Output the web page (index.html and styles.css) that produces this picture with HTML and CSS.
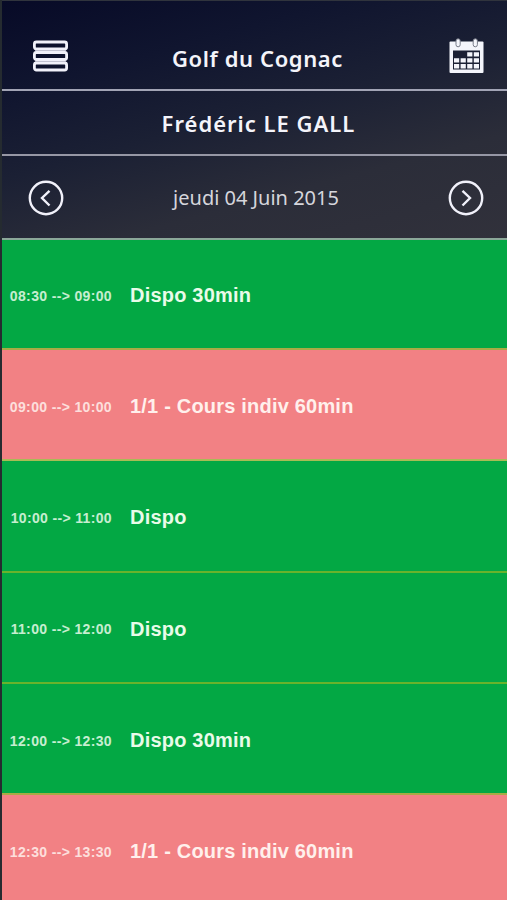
FILE: index.html
```
<!DOCTYPE html>
<html lang="fr">
<head>
  <meta charset="UTF-8" />
  <meta name="viewport" content="width=device-width, initial-scale=1.0" />
  <title>Golf du Cognac</title>
  <link rel="stylesheet" href="styles.css">
</head>
<body>

  <header class="header">
    <div class="bar top-bar">
      <svg class="icon menu" width="38" height="32" viewBox="0 0 38 32">
        <path class="shade" d="M5 10.700h31M5 21.300h31" />
        <rect x="4.400" y="2" width="32.200" height="7" rx="2" />
        <rect x="4.400" y="12.500" width="32.200" height="7" rx="2" />
        <rect x="4.400" y="23" width="32.200" height="7" rx="2" />
      </svg>
      <h1>Golf du Cognac</h1>
      <svg class="icon calendar" width="36" height="36" viewBox="0 0 36 36">
        <path class="sheet" d="M1.5 3.5h32q1 0 1 1v29.500q0 1-1 1h-32q-1 0-1-1v-29.500q0-1 1-1z" />
        <path class="grid" d="M4 12.500h27v19h-27z" />
        <path class="days" d="M18.200 14.300h5.200v4.300h-5.200zM24.800 14.300h5.200v4.300h-5.200zM5 20.200h5.200v4.300h-5.200zM11.600 20.200h5.200v4.300h-5.200zM18.200 20.200h5.200v4.300h-5.200zM24.800 20.200h5.200v4.300h-5.200zM5 26.100h5.200v4.300h-5.200zM11.600 26.100h5.200v4.300h-5.200zM18.200 26.100h5.200v4.300h-5.200zM24.800 26.100h5.200v4.300h-5.200z" />
        <rect class="ring" x="7" y="0.800" width="4.200" height="8" rx="2.100" />
        <rect class="ring" x="24.200" y="0.800" width="4.200" height="8" rx="2.100" />
      </svg>
    </div>

    <div class="bar name-bar">
      <h2>Frédéric LE GALL</h2>
    </div>

    <div class="bar date-bar">
      <svg class="icon arrow" width="36" height="36" viewBox="0 0 36 36">
        <circle cx="18" cy="18" r="16.200" />
        <path d="M21.500 10.800L14 18l7.500 7.500" />
      </svg>
      <p class="date">jeudi 04 Juin 2015</p>
      <svg class="icon arrow" width="36" height="36" viewBox="0 0 36 36">
        <circle cx="18" cy="18" r="16.200" />
        <path d="M14.500 10.800L22 18l-7.500 7.500" />
      </svg>
    </div>
  </header>

  <main class="planning">
    <div class="slot libre"><span class="heure">08:30 --&gt; 09:00</span><span class="cours">Dispo 30min</span></div>
    <div class="slot pris"><span class="heure">09:00 --&gt; 10:00</span><span class="cours">1/1 - Cours indiv 60min</span></div>
    <div class="slot libre"><span class="heure">10:00 --&gt; 11:00</span><span class="cours">Dispo</span></div>
    <div class="slot libre"><span class="heure">11:00 --&gt; 12:00</span><span class="cours">Dispo</span></div>
    <div class="slot libre"><span class="heure">12:00 --&gt; 12:30</span><span class="cours">Dispo 30min</span></div>
    <div class="slot pris"><span class="heure">12:30 --&gt; 13:30</span><span class="cours">1/1 - Cours indiv 60min</span></div>
  </main>

</body>
</html>
```
FILE: styles.css
```
* {
  box-sizing: border-box;
}
body {
  margin: 0;
  height: 900px;
  overflow: hidden;
  border-left: 2px solid #252b30;
  background-color: #2e2f3a;
  font-family: "Liberation Sans", Arial, sans-serif;
}
h1, h2, p {
  margin: 0;
}
.header {
  height: 240px;
  border-top: 1px solid #30343d;
  border-bottom: 2px solid #8ba899;
  background: linear-gradient(165deg, #070a27 0%, #10152f 25%, #1b2034 48%, #2b2d39 72%, #31313b 100%);
  color: #f4f4fa;
  font-family: "Noto Sans", "Open Sans", sans-serif;
}
.bar {
  display: flex;
  align-items: center;
  justify-content: space-between;
  padding: 0 23px 0 26px;
}
.top-bar {
  height: 90px;
  padding: 22px 22px 0 28px;
  border-bottom: 2px solid #a2a4b5;
}
.name-bar {
  height: 65px;
  justify-content: center;
  padding: 1px 0 0 8px;
  border-bottom: 2px solid #9697a5;
}
.date-bar {
  height: 83px;
  padding-top: 1px;
}
h1, h2 {
  font-size: 22px;
  font-weight: 600;
  line-height: 30px;
}
h1 {
  padding-top: 4px;
  margin-left: -2px;
  letter-spacing: 0.6px;
}
h2 {
  letter-spacing: 1px;
}
.date {
  color: #d6d6dc;
  font-size: 20px;
  font-weight: 400;
  line-height: 28px;
}
.icon {
  display: block;
  fill: none;
  stroke: #f1f1fa;
}
.menu {
  stroke-width: 2.8;
}
.menu .shade {
  stroke: #9293a8;
  stroke-width: 2;
}
.calendar {
  stroke: none;
}
.calendar .sheet, .calendar .days {
  fill: #f4f5fb;
}
.calendar .grid {
  fill: #1b2034;
}
.calendar .ring {
  fill: #f4f5fb;
  stroke: #777b88;
  stroke-width: 1;
}
.arrow {
  stroke-width: 2.4;
}
.slot {
  display: flex;
  align-items: center;
  height: 111.3px;
  padding: 4px 0 0 7px;
  border-bottom: 2px solid #69b32c;
  color: #e9fbe9;
  font-weight: bold;
}
.slot:first-child {
  height: 110px;
  padding-top: 3px;
}
.libre {
  background-color: #03a844;
}
.pris {
  background-color: #f28184;
  border-bottom-color: #a9bb55;
  color: #fff0ec;
}
.slot:has(+ .pris) {
  border-bottom-color: #a9aa45;
}
.heure {
  width: 121px;
  padding-right: 18px;
  font-size: 14px;
  letter-spacing: 0.35px;
  text-align: right;
  white-space: nowrap;
  opacity: 0.85;
}
.cours {
  font-size: 20px;
  letter-spacing: 0.2px;
  white-space: nowrap;
}
```
